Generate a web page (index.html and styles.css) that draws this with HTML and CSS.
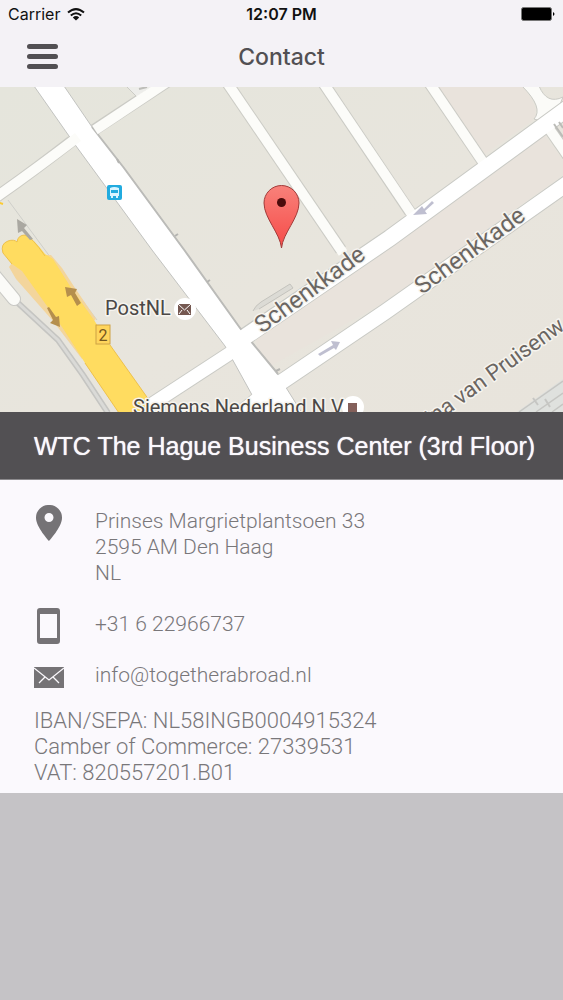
FILE: index.html
```html
<!DOCTYPE html>
<html lang="en">
<head>
  <meta charset="UTF-8">
  <meta name="viewport" content="width=device-width, initial-scale=1.0">
  <title>Contact</title>
  <link rel="stylesheet" href="styles.css">
</head>
<body>
  <!-- Header -->
  <header class="header">
    <div class="status-bar">
      <div class="carrier">
        <span>Carrier</span>
        <svg width="18" height="13" viewBox="0 0 18 13" fill="none" stroke="#111" stroke-width="2">
          <path d="M1 4.6Q9-2.4 17 4.6M3.8 7.5Q9 3 14.2 7.5"/>
          <path d="M5.8 9.4Q9 6.6 12.2 9.4L9 12.6Z" fill="#111" stroke="none"/>
        </svg>
      </div>
      <strong class="time">12:07 PM</strong>
      <svg class="battery" width="34" height="14" viewBox="0 0 34 14">
        <rect x="0.5" y="0.5" width="30" height="13" rx="2" fill="#000" stroke="#777"/>
        <path d="M32 5Q35 7 32 9Z" fill="#000"/>
      </svg>
    </div>
    <nav class="nav-bar">
      <button class="menu-btn" type="button" aria-label="Menu">
        <svg width="31" height="27" viewBox="0 0 31 27" stroke="#525053" stroke-width="5" stroke-linecap="round">
          <path d="M2.5 3.5H28.5M2.5 13.5H28.5M2.5 23.5H28.5"/>
        </svg>
      </button>
      <h1>Contact</h1>
    </nav>
  </header>

  <!-- Map -->
  <svg class="map" viewBox="0 87 563 325" role="img" aria-label="Map">
    <defs>
      <linearGradient id="land" x1="0" y1="0" x2="1" y2="1">
        <stop offset="0" stop-color="#e5e5dc"/>
        <stop offset="0.55" stop-color="#e8e5dd"/>
        <stop offset="1" stop-color="#e8e4dc"/>
      </linearGradient>
      <linearGradient id="pin" x1="0" y1="0" x2="0" y2="1">
        <stop offset="0" stop-color="#f8817a"/>
        <stop offset="1" stop-color="#f64b48"/>
      </linearGradient>
    </defs>
    <rect y="87" width="563" height="325" fill="url(#land)"/>
    <path d="M438 87H523Q542 110 532 121L485 154ZM483 169L543 134L563 160V175L385 302L260 372L256 338Z" fill="#e9e3dc"/>

    <!-- Railway -->
    <path d="M517 412L563 379V412Z" fill="#dfe1de"/>
    <g fill="none" stroke="#c6c6c3" stroke-width="1.5">
      <path d="M519 412L563 381M536 412L563 393M552 412L563 404"/>
      <path d="M533 398L538 405M545 399L550 407" stroke-width="2"/>
    </g>

    <!-- Minor roads -->
    <g fill="none" stroke="#cbcbc5" stroke-width="12">
      <path d="M-5 198Q32 172 72 141"/>
      <path d="M94 130L170 80"/>
      <path d="M226 81L341 250"/>
      <path d="M322 81L410 212"/>
      <path d="M428 81L483 162"/>
      <path d="M546 124L568 156"/>
    </g>
    <path d="M522 86Q544 108 534 119L552 124L563 97Q547 105 539 86Z" fill="#fbfbf8" stroke="#cbcbc5"/>
    <path d="M126 86L137 97L153 86Z" fill="#ededea" stroke="#cbcbc5"/>
    <path d="M139 89L147 87" stroke="#bdbdb9" stroke-width="2"/>
    <g fill="none" stroke="#c9cac5">
      <path d="M240 340L390 238L568 108" stroke-width="18"/>
      <path d="M280 383L385 312L568 183" stroke-width="17"/>
      <path d="M140 412L235 350" stroke-width="15"/>
      <path d="M240 413L270 389" stroke-width="15"/>
    </g>
    <path d="M34 86H64L92 127L124 168L185 251L240 328L275 370L302 413H262L225 346L152 250L76 146Z" fill="#fff" stroke="#c2c3c0"/>
    <path d="M92 127L124 168L185 251L240 328L278 374" fill="none" stroke="#bbbbb8" stroke-width="2"/>
    <path d="M117 159L119 163M175 236L178 234M207 282L210 280M276 371L280 369" fill="none" stroke="#b5b5b2" stroke-width="2"/>
    <g fill="none" stroke="#fcfcf9" stroke-width="10">
      <path d="M-5 198Q32 172 78 137"/>
      <path d="M95 130L170 80"/>
      <path d="M226 81L343 253"/>
      <path d="M322 81L413 216"/>
      <path d="M428 81L487 168"/>
      <path d="M543 120L568 156"/>
    </g>
    <g fill="none" stroke="#fff">
      <path d="M236 343L390 238L568 108" stroke-width="16"/>
      <path d="M274 387L385 312L568 183" stroke-width="15"/>
      <path d="M140 412L238 348" stroke-width="13"/>
      <path d="M238 415L274 386" stroke-width="14"/>
    </g>
    <path d="M554 124L563 137M559 122L563 128" stroke="#bcbcb8" stroke-width="2"/>
    <path d="M253 311Q255 306 261 302L290 284L293 288L259 309" fill="#dcdbd5" stroke="#c4c3bd"/>

    <!-- Highway -->
    <path d="M8 200L45 250L97 320" fill="none" stroke="#cfcfca"/>
    <path d="M-3 202L3 204" stroke="#fbcb32" stroke-width="2"/>
    <path d="M18 303L58 340L83 375L108 413" fill="none" stroke="#c5c5c2" stroke-width="6"/>
    <path d="M18 303L58 340L83 375L108 413" fill="none" stroke="#dadad7" stroke-width="3"/>
    <path d="M-5 276L14 299" stroke="#c9c9c5" stroke-width="14" stroke-linecap="round"/>
    <path d="M-5 276L14 299" stroke="#fbfbf8" stroke-width="12" stroke-linecap="round"/>
    <path d="M12 263L9 267L16 279L53 321L82 359L90 350L30 263ZM44 255L51 255L62 268L75 288L96 319L88 326Z" fill="#f3d59c"/>
    <path d="M3 253Q0 244 8 241Q14 239 17 242Q18 235 25 235Q32 237 45 254L53 259L70 286L94 320L110 345L149 400V413H119L85 363L62 327L22 271L12 264Z" fill="#ffdc60"/>
    <path d="M12 264L3 253Q0 244 8 241Q14 239 17 242Q18 235 25 235Q32 237 45 256M110 345L149 400M85 363L119 413" fill="none" stroke="#eec14c"/>
    <g fill="#b58f4d">
      <path d="M65 287L77 289L75 293L81 303L77 306L71 295L67 297Z"/>
      <path d="M47 308L53 320L50 323L60 327L59 316L56 317L49 307Z"/>
    </g>
    <path d="M17 219L27 225L24 228L33 239L30 240L22 231L18 233Z" fill="#aaa8a1"/>
    <rect x="96" y="325" width="14" height="19" fill="#ffd55c" stroke="#cea245"/>
    <text class="map-label route" x="103" y="341" text-anchor="middle">2</text>

    <!-- One way arrows -->
    <g fill="#bfbfd0">
      <path d="M413 215L422 206L424 209L432 201L434 203L425 211L427 214Z"/>
      <path d="M318 354L333 345L331 341L340 342L336 350L334 348L320 356Z"/>
    </g>

    <!-- Bus stop -->
    <rect x="107" y="185" width="15" height="15" rx="2" fill="#21abdf"/>
    <path d="M110 188Q114 186 119 188V196H118V198H116V196H113V198H111V196H110Z" fill="#d8f4ff"/>
    <path d="M111 190H118V193H111Z" fill="#21abdf"/>

    <!-- Street names -->
    <text class="map-label street" transform="translate(262 334) rotate(-36)">Schenkkade</text>
    <text class="map-label street" transform="translate(422 295) rotate(-36)">Schenkkade</text>
    <text class="map-label street small" transform="translate(432 426) rotate(-36)">ina van Pruisenw</text>

    <!-- Places -->
    <text class="map-label place" x="105" y="315">PostNL</text>
    <circle cx="185" cy="309" r="11" fill="#fff"/>
    <rect x="178" y="304" width="13" height="11" fill="#755851"/>
    <path d="M178 304L184.500 310L191 304M179 314L182 310M190 314L187 310" fill="none" stroke="#fff"/>
    <text class="map-label place" x="133" y="414">Siemens Nederland N.V</text>
    <circle cx="353" cy="407" r="11" fill="#fff"/>
    <rect x="348" y="403" width="9" height="12" fill="#84605a"/>

    <!-- Pin -->
    <path d="M281.500 248C280 233 264 218 264 203A17.500 17.500 0 0 1 299 203C299 218 283 233 281.500 248Z" fill="url(#pin)" stroke="#a23c3a"/>
    <circle cx="281.500" cy="202.500" r="4.500" fill="#4b0b0b"/>
  </svg>

  <!-- Contact Details -->
  <main>
    <h2>WTC The Hague Business Center (3rd Floor)</h2>
    <div class="details">
      <div class="row">
        <svg class="icon" width="30" height="36" viewBox="0 0 30 36">
          <path d="M15 0A12.500 12.500 0 0 0 2 13C2 22 15 36 15 36S28 22 28 13A12.500 12.500 0 0 0 15 0ZM15 8A4.500 4.500 0 1 1 15 17A4.500 4.500 0 0 1 15 8Z"/>
        </svg>
        <p>Prinses Margrietplantsoen 33<br>2595 AM Den Haag<br>NL</p>
      </div>
      <div class="row phone">
        <svg class="icon" width="30" height="36" viewBox="0 0 30 36">
          <path fill-rule="evenodd" d="M6 0H23Q26 0 26 3V33Q26 36 23 36H6Q3 36 3 33V3Q3 0 6 0ZM6 6V30H23V6Z"/>
        </svg>
        <p><a href="tel:+31622966737">+31 6 22966737</a></p>
      </div>
      <div class="row email">
        <svg class="icon" width="30" height="21" viewBox="0 0 30 21">
          <path d="M0 0H30V21H0Z"/>
          <path d="M0 1L15 13L30 1M5 16L11 10M25 16L19 10" fill="none" stroke="#fbf9fd" stroke-width="1.300"/>
        </svg>
        <p><a href="mailto:info@togetherabroad.nl">info@togetherabroad.nl</a></p>
      </div>
      <p class="company">IBAN/SEPA: NL58INGB0004915324<br>Camber of Commerce: 27339531<br>VAT: 820557201.B01</p>
    </div>
  </main>
</body>
</html>
```
FILE: styles.css
```css
:root {
  --header-bg: #f4f2f6;
  --panel-bg: #fbf9fd;
  --page-bg: #c5c3c6;
  --dark: #525053;
  --text: #79777a;
}
* {
  box-sizing: border-box;
}
body {
  margin: 0;
  background: var(--page-bg);
  font-family: "Liberation Sans", Arial, sans-serif;
  color: var(--text);
}
h1, h2, p {
  margin: 0;
}
svg {
  display: block;
}
/* Header */
.header {
  background: var(--header-bg);
  font-family: Inter, sans-serif;
}
.status-bar {
  display: grid;
  grid-template-columns: 1fr auto 1fr;
  align-items: center;
  height: 28px;
  padding: 0 8px;
  font-size: 16px;
  color: #111;
}
.carrier {
  display: flex;
  align-items: center;
  gap: 7px;
}
.time {
  font-weight: 600;
}
.battery {
  justify-self: end;
}
.nav-bar {
  display: grid;
  grid-template-columns: 1fr auto 1fr;
  align-items: center;
  height: 59px;
  padding: 0 27px 2px;
}
.menu-btn {
  justify-self: start;
  padding: 0;
  border: none;
  background: none;
  cursor: pointer;
}
h1 {
  font-size: 23px;
  font-weight: 500;
  color: var(--dark);
}
/* Map */
.map {
  width: 100%;
  height: auto;
}
.map-label {
  font-family: Roboto, sans-serif;
  fill: #4b4846;
  stroke: #f6f4ef;
  stroke-width: 3px;
  stroke-linejoin: round;
  paint-order: stroke;
}
.street {
  font-size: 24px;
  fill: #6b6662;
}
.small {
  font-size: 22px;
}
.place {
  font-size: 20px;
}
.route {
  font-size: 16px;
  fill: #75571f;
  stroke: none;
}
/* Contact Details */
h2 {
  padding: 20px 16px 19px 34px;
  border-bottom: 1px solid #8c8a8d;
  background: var(--dark);
  color: #fbf9fd;
  font-size: 25px;
  line-height: 28px;
  font-weight: 400;
  text-shadow: 0 0 1px #fbf9fd;
}
.details {
  padding: 25px 34px 7px;
  background: var(--panel-bg);
  font-family: Roboto, sans-serif;
  font-size: 22px;
  font-weight: 300;
  line-height: 26px;
}
.row {
  display: flex;
  align-items: flex-start;
  gap: 31px;
  font-size: 21px;
}
.row p {
  padding-top: 3px;
}
.row a {
  color: inherit;
  text-decoration: none;
}
.icon {
  flex: none;
  fill: #757376;
}
.phone {
  margin-top: 22px;
}
.email {
  align-items: flex-end;
  margin-top: 15px;
}
.company {
  margin-top: 20px;
}
```
